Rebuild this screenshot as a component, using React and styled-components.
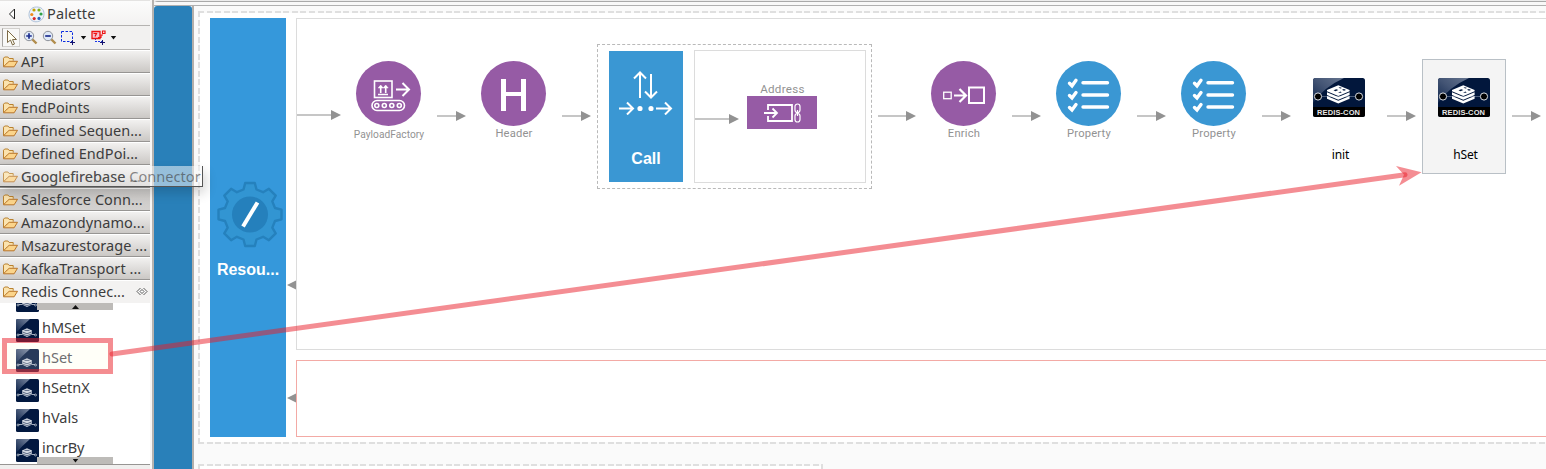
import React from "react";
import styled, { createGlobalStyle } from "styled-components";

const ui = `"Noto Sans", "Open Sans", sans-serif`;

const GlobalStyle = createGlobalStyle`
  *, *::before, *::after { box-sizing: border-box; }
  html, body { margin: 0; padding: 0; background: #fafafa; overflow: hidden; }
  svg { display: block; flex: none; }
`;

const Shell = styled.div`
  position: relative;
  display: flex;
  width: 1546px;
  height: 469px;
  overflow: hidden;
  background: #f2f1f0;
`;

/* ---------- palette ---------- */
const Palette = styled.aside`
  display: flex;
  flex-direction: column;
  width: 150px;
  height: 469px;
  flex: none;
  font-family: ${ui};
  color: #3c3c3c;
`;
const PaletteHead = styled.div`
  display: flex;
  align-items: center;
  height: 26px;
  padding: 2px 0 0 8px;
  border-top: 1px solid #e4e3e2;
  border-bottom: 1px solid #b5b3b1;
  background: linear-gradient(#fcfcfc, #f3f2f1);
`;
const PaletteTitle = styled.span`
  margin: -2px 0 0 2px;
  font-size: 14.5px;
  line-height: 20px;
  letter-spacing: 0.15px;
`;
const Tools = styled.div`
  display: flex;
  align-items: center;
  height: 24px;
  padding-left: 2px;
  background: #f2f1f0;
  border-bottom: 1px solid #b5b3b1;
`;
const ToolButton = styled.span`
  display: flex;
  align-items: center;
  justify-content: center;
  width: ${(p) => p.$w}px;
  height: 19px;
  border: 1px solid ${(p) => (p.$on ? "#d2d0cd" : "transparent")};
  border-left-color: ${(p) => (p.$on ? "#a5a3a0" : "transparent")};
  background: ${(p) => (p.$on ? "#f8f8f7" : "transparent")};
`;
const Drawer = styled.div`
  display: flex;
  align-items: center;
  height: 23px;
  flex: none;
  padding-left: 2px;
  border-top: 1px solid #fff;
  border-bottom: 1px solid ${(p) => (p.$open ? "#f3f2f1" : "#979593")};
  background: ${(p) =>
    p.$open ? "#f3f2f1" : p.$hover ? "linear-gradient(#cbc9c7, #d3d1cf)" : "linear-gradient(#f2f1f0, #cbc8c5)"};
`;
const DrawerLabel = styled.span`
  margin: -2px 0 0 3px;
  font-size: 14.5px;
  line-height: 20px;
  letter-spacing: 0.05px;
  white-space: pre;
`;
const Pin = styled.span`
  margin-left: auto;
  padding-right: 2px;
`;
const Entries = styled.div`
  position: relative;
  height: 161px;
  overflow: hidden;
  background: #fff;
`;
const EntryColumn = styled.div`
  margin-top: -20px;
`;
const Entry = styled.div`
  display: flex;
  align-items: center;
  width: 112px;
  height: 30px;
  padding-left: 16px;
  font-size: 14.5px;
  background: ${(p) => (p.$on ? "#fffff8" : "transparent")};
  color: ${(p) => (p.$on ? "#6e6e70" : "#3c3c3c")};
  svg { margin-top: 5px; opacity: ${(p) => (p.$on ? 0.85 : 1)}; }
`;
const EntryName = styled.span`
  margin: -2px 0 0 3px;
  line-height: 20px;
`;
const Scroller = styled.div`
  position: absolute;
  left: 37px;
  ${(p) => (p.$end ? "bottom: 0;" : "top: 0;")}
  display: flex;
  align-items: center;
  justify-content: center;
  width: 76px;
  height: 7px;
  background: #bdbbb8;
`;
const PaletteFoot = styled.div`
  flex: 1;
  border-top: 1px solid #979593;
  background: #f0efee;
`;
const Tooltip = styled.div`
  position: absolute;
  left: 0;
  top: 166px;
  width: 203px;
  height: 21px;
  padding-left: 21px;
  font: 14.5px/20px ${ui};
  letter-spacing: 0.05px;
  white-space: pre;
  color: rgba(60, 60, 60, 0.78);
  background: linear-gradient(90deg, rgba(248, 248, 248, 0.2) 0 18px, rgba(248, 248, 248, 0.4) 30px 120px, rgba(248, 248, 248, 0.53) 150px);
  border-right: 1px solid #555;
  border-bottom: 1px solid #555;
  box-shadow: 3px 6px 12px rgba(0, 0, 0, 0.16);
`;
const Faded = styled.span`
  color: rgba(60, 60, 60, 0.6);
`;

/* ---------- editor ---------- */
const Sash = styled.div`
  width: 4px;
  flex: none;
  background: linear-gradient(90deg, #f7f6f5 0 2px, #b5b2af 2px 3px, #b8b4b0 3px 4px);
`;
const EditorFrame = styled.div`
  display: flex;
  flex-direction: column;
  flex: 1;
  min-width: 0;
`;
const FrameTop = styled.div`
  height: 6px;
  flex: none;
  border-top: 1px solid #ececec;
  background: linear-gradient(#a9a9a9 0 1px, #f8f8f8 1px 4px, #b0b0b0 4px 5px);
  border-top-left-radius: 4px;
`;
const EditorBody = styled.div`
  display: flex;
  flex: 1;
`;
const Rail = styled.div`
  width: 38px;
  flex: none;
  background: #2980b9;
  border-radius: 3px 3px 0 0;
`;
const Surface = styled.main`
  flex: 1;
  min-width: 0;
  border-left: 2px solid #b3afab;
  background: #fafafa;
  padding: 5px 0 0 4px;
`;
const dashX = "repeating-linear-gradient(90deg, #dfdfdf 0 6px, #fafafa 6px 8.54px)";
const dashY = "repeating-linear-gradient(180deg, #dfdfdf 0 6px, #fafafa 6px 8.54px)";
const Artifact = styled.section`
  display: flex;
  width: ${(p) => p.$w}px;
  height: ${(p) => p.$h}px;
  margin-bottom: 20px;
  padding: 7px 0 0 12px;
  background: ${dashX} 0 0 / 100% 2px no-repeat, ${dashX} 0 100% / 100% 2px no-repeat,
    ${dashY} 0 0 / 2px 100% no-repeat, ${dashY} 100% 0 / 2px 100% no-repeat, #fff;
`;
const Resource = styled.div`
  display: flex;
  flex-direction: column;
  align-items: center;
  width: 76px;
  height: 419px;
  flex: none;
  padding-top: 163px;
  background: #3598db;
  > svg { margin-left: 3px; }
`;
const BlockTitle = styled.span`
  margin-top: ${(p) => p.$gap}px;
  font: bold 16px/20px "Liberation Sans", Arial, sans-serif;
  color: #fff;
`;
const Ports = styled.div`
  display: flex;
  flex-direction: column;
  width: 10px;
  flex: none;
  padding: 261.5px 0 0 1px;
  gap: 103px;
`;
const Flows = styled.div`
  display: flex;
  flex-direction: column;
  gap: 10px;
`;
const Sequence = styled.div`
  position: relative;
  width: 1300px;
  height: ${(p) => p.$h}px;
  border: 1px solid ${(p) => p.$line};
  background: #fff;
`;

/* items placed freely on the sequence canvas */
const Placed = styled.div`
  position: absolute;
  left: ${(p) => p.$x - 297}px;
  top: ${(p) => p.$y - 19}px;
`;
const Mediator = styled(Placed)`
  display: flex;
  flex-direction: column;
  align-items: center;
  width: 79px;
`;
const Disc = styled.div`
  display: flex;
  align-items: center;
  justify-content: center;
  width: 65px;
  height: 65px;
  border-radius: 50%;
  background: ${(p) => p.$fill};
`;
const Caption = styled.span`
  margin-top: ${(p) => p.$gap ?? 1}px;
  padding-left: 1px;
  font: ${(p) => p.$size || 11.2}px/14px Roboto, sans-serif;
  letter-spacing: ${(p) => p.$ls ?? 0.2}px;
  color: #929292;
  white-space: nowrap;
`;
const CallBox = styled(Placed)`
  display: flex;
  gap: 11px;
  width: 275px;
  height: 145px;
  padding: 5px 0 0 11px;
  border: 1px dashed #b9b9b9;
  background: #fff;
`;
const CallBlock = styled.div`
  display: flex;
  flex-direction: column;
  align-items: center;
  width: 74px;
  height: 131px;
  margin-top: 1px;
  padding-top: 20px;
  background: #3a97d3;
`;
const Endpoint = styled.div`
  display: flex;
  width: 172px;
  height: 133px;
  border: 1px solid #dcdcdc;
`;
const EndpointLine = styled.div`
  padding-top: 63px;
`;
const Address = styled.div`
  display: flex;
  flex-direction: column;
  align-items: center;
  margin-left: 8px;
  padding-top: 31px;
`;
const AddressBlock = styled.div`
  display: flex;
  align-items: center;
  justify-content: center;
  width: 70px;
  height: 33px;
  background: #965ba5;
`;
const Connector = styled(Placed)`
  display: flex;
  flex-direction: column;
  align-items: center;
  width: 84px;
  height: 115px;
  padding-top: 18px;
  border: 1px solid ${(p) => (p.$on ? "#b9c0c6" : "transparent")};
  background: ${(p) => (p.$on ? "#f4f4f4" : "transparent")};
`;
const ConnectorName = styled.span`
  margin-top: 30px;
  padding-left: 3px;
  font: 12px/16px ${ui};
  letter-spacing: -0.1px;
  color: #000;
`;
const Annotation = styled.svg`
  position: absolute;
  left: 0;
  top: 0;
`;

/* ---------- drawings ---------- */
const Folder = () => (
  <svg width="16" height="14" viewBox="0 0 16 14">
    <path d="M1.5 11.5V3.2L2.7 2h3.2l1.3 1.5h4v2.2" fill="#fbe3ae" stroke="#b9812f" />
    <path d="M1.5 11.8L5.2 8l2-1.7h8.3l-3.4 5.5z" fill="#fbd48a" stroke="#b9762a" strokeLinejoin="round" />
  </svg>
);
const PaletteIcon = () => (
  <svg width="17" height="17" viewBox="0 0 17 17">
    <path d="M8.5 1C3 1 1 5 1 8.8S4 15.8 8 15.8 16 13 16 8 13 1 8.5 1z" fill="#eef4fb" stroke="#9db4cf" strokeWidth=".8" />
    <circle cx="6" cy="4" r="1.6" fill="#c4a000" />
    <circle cx="11" cy="4" r="1.6" fill="#7fae1c" />
    <circle cx="13" cy="8" r="1.6" fill="#2fa347" />
    <circle cx="3.8" cy="8.5" r="1.6" fill="#f08a1d" />
    <circle cx="6.2" cy="12.6" r="1.6" fill="#d92b2b" />
    <circle cx="11" cy="12.4" r="1.6" fill="#2c62b8" />
  </svg>
);
const Magnifier = ({ plus }) => (
  <svg width="15" height="15" viewBox="0 0 15 15">
    <path d="M9 9l4.5 4.5" stroke="#b08d4c" strokeWidth="2.4" />
    <circle cx="6" cy="6" r="4.7" fill="#dfe9f7" stroke="#8d9199" />
    <path d={plus ? "M3.2 6h5.6M6 3.2v5.6" : "M3.2 6h5.6"} stroke="#1f2f8f" strokeWidth="1.7" />
  </svg>
);
const Caret = ({ up }) => (
  <svg width="7" height="4" viewBox="0 0 7 4">
    <path d={up ? "M0 4L3.5 0 7 4z" : "M.8 0h5.4L3.5 3.6z"} fill="#111" />
  </svg>
);
const ArrowRight = ({ tail }) => (
  <svg width={tail + 10} height="10" viewBox={`0 0 ${tail + 10} 10`}>
    <path d={`M0 5H${tail}`} stroke="#c6c6c6" strokeWidth="2" />
    <path d={`M${tail} 0L${tail + 10} 5L${tail} 10z`} fill="#929292" />
  </svg>
);
const PortArrow = () => (
  <svg width="9" height="10" viewBox="0 0 9 10">
    <path d="M9 .5v9L0 5z" fill="#929292" />
  </svg>
);
const SmallRedis = () => (
  <svg width="23" height="23" viewBox="0 0 23 23">
    <defs>
      <linearGradient id="sheen" x1="0" y1="1" x2="1" y2="0">
        <stop offset="0" stopColor="#0a2048" />
        <stop offset="1" stopColor="#7b89a1" />
      </linearGradient>
    </defs>
    <rect width="23" height="23" rx="1.5" fill="#02183f" />
    <path d="M0 1.5Q0 0 1.500 0H14Q7 6 0 14z" fill="url(#sheen)" />
    <path d="M2 15.500h4M16 15.500h4" stroke="#cdd3dd" strokeWidth=".8" />
    <circle cx="2" cy="16" r="1" fill="#02183f" stroke="#cfd5de" strokeWidth=".7" />
    <circle cx="19.500" cy="16" r="1" fill="#02183f" stroke="#cfd5de" strokeWidth=".7" />
    <path d="M6 11.500L11 9.200l5 2.300v4L11 17.900l-5-2.400z" fill="#d3d8e1" />
    <path d="M6 12.800l5 2 5-2M6 14.800l5 2 5-2M8.500 11.400h5" stroke="#27395a" strokeWidth=".7" fill="none" />
  </svg>
);
const RedisCard = () => (
  <svg width="52" height="39" viewBox="0 0 52 39">
    <defs>
      <linearGradient id="shine" x1="0" y1="1" x2="1" y2="0">
        <stop offset="0" stopColor="#12284e" />
        <stop offset=".5" stopColor="#435474" />
        <stop offset="1" stopColor="#66758f" />
      </linearGradient>
    </defs>
    <rect width="52" height="39" rx="2.5" fill="#02173c" />
    <path d="M0 2.5Q0 0 2.5 0H31Q11 9 0 25z" fill="url(#shine)" />
    <path d="M0 29h52v7.500q0 2.500-2.500 2.500h-47Q0 39 0 36.500z" fill="#000" />
    <path d="M5 18.500h42" stroke="#60708c" strokeWidth=".8" />
    <path d="M14 18v2.800L25.300 25.500 36.600 20.800V18L25.300 22.700zM14 14.200V17l11.300 4.700L36.600 17v-2.800L25.300 18.900z" fill="#fff" />
    <path d="M14 12v1.200L25.300 17.900l11.300-4.700V12L25.300 7.300z" fill="#fff" />
    <path d="M20.500 12.300l2.800-1.100 2 .9-2.800 1.200zM25.500 9.800l1.500-.6 2 .8-1.500.6zM29 11.800l2-.8 2 .9-2 .8zM25 14.800l2.500-1.300 1.200 1.300z" fill="#02173c" />
    <circle cx="5" cy="18.500" r="3.600" fill="#000" stroke="#d8dbe0" strokeWidth="1" />
    <circle cx="46" cy="18.500" r="3.600" fill="#000" stroke="#d8dbe0" strokeWidth="1" />
    <text x="4" y="36.500" textLength="43" fontFamily="Liberation Sans" fontSize="7.500" fontWeight="bold" fill="#e8e8e8">REDIS-CON</text>
  </svg>
);

const gearPath = (() => {
  const pts = [];
  const at = (deg, along, side) => {
    const a = (deg * Math.PI) / 180;
    pts.push(`${(33 + Math.cos(a) * along - Math.sin(a) * side).toFixed(1)} ${(33.5 + Math.sin(a) * along + Math.cos(a) * side).toFixed(1)}`);
  };
  for (let d = 0; d < 360; d += 45) {
    at(d, 25, -6.5);
    at(d, 31.5, -4.8);
    at(d, 31.5, 4.8);
    at(d, 25, 6.5);
  }
  return `M${pts.join("L")}Z`;
})();
const Gear = () => (
  <svg width="66" height="67" viewBox="0 0 66 67">
    <path d={gearPath} fill="#3295d2" stroke="#2581bd" strokeWidth="2.4" strokeLinejoin="round" />
    <circle cx="33" cy="33.500" r="18" fill="#2580bc" />
    <path d="M26 45.500L40.500 21.500" stroke="#fff" strokeWidth="4" />
  </svg>
);
const White = ({ w, h, sw = 2, children }) => (
  <svg width={w} height={h} viewBox={`0 0 ${w} ${h}`} fill="none" stroke="#fff" strokeWidth={sw}>
    {children}
  </svg>
);
const glyphs = {
  payload: (
    <White w={65} h={65} sw={1.6}>
      <rect x="18.500" y="20" width="17.500" height="16.500" />
      <path d="M22 33.500h10M24.700 32v-7M29.700 32v-7" />
      <path d="M22.200 27l2.500-3 2.500 3zM27.200 27l2.500-3 2.500 3z" fill="#fff" strokeWidth=".5" />
      <path d="M40 28.500h13M46.500 22l6.500 6.500-6.500 6.500" strokeWidth="2" />
      <rect x="16" y="39.500" width="32.500" height="10" rx="5" />
      {[21, 28.5, 36, 43.5].map((x) => <circle key={x} cx={x - 0.2} cy="44.500" r="2" />)}
    </White>
  ),
  header: (
    <White w={65} h={65} sw={5}>
      <path d="M22.500 18v32M42.500 18v32" />
      <path d="M22.500 33h20" strokeWidth="4" />
    </White>
  ),
  enrich: (
    <White w={65} h={65} sw={1.3}>
      <rect x="12.700" y="31.200" width="7.500" height="6.500" />
      <path d="M23 34.500h12M28.500 28l6.500 6.500-6.500 6.500" strokeWidth="2.200" />
      <rect x="38" y="26.500" width="15" height="15.500" strokeWidth="2" />
    </White>
  ),
  property: (
    <White w={65} h={65} sw={3.4}>
      {[21.8, 34, 46].map((y) => (
        <g key={y} strokeLinecap="round">
          <path d={`M27 ${y}h24.500`} />
          <path d={`M13.500 ${y + 0.5}l2.500 2.500 4-5.500`} />
        </g>
      ))}
    </White>
  ),
};

const purple = "#965ba5";
const blue = "#3a97d3";
const mediators = [
  { x: 349, icon: "payload", name: "PayloadFactory", fill: purple, size: 10.2, ls: 0.02, gap: 1.5 },
  { x: 474, icon: "header", name: "Header", fill: purple },
  { x: 924, icon: "enrich", name: "Enrich", fill: purple },
  { x: 1049, icon: "property", name: "Property", fill: blue },
  { x: 1174, icon: "property", name: "Property", fill: blue },
];
const links = [[437, 19], [562, 19], [878, 28], [1012, 19], [1137, 19], [1262, 19], [1387, 19], [1512, 19]];
const drawers = [
  "API", "Mediators", "EndPoints", "Defined Sequen...", "Defined EndPoi...",
  "Googlefirebase ...", "Salesforce Conn...", "Amazondynamo...", "Msazurestorage ...", "KafkaTransport ...",
];
const entries = ["hMGet", "hMSet", "hSet", "hSetnX", "hVals", "incrBy"];

export default function App() {
  return (
    <>
      <GlobalStyle />
      <Shell>
        <Palette>
          <PaletteHead>
            <svg width="20" height="14" viewBox="0 0 20 14"><path d="M6.500 2v10L1.500 7z" fill="#fff" stroke="#222" /></svg>
            <PaletteIcon />
            <PaletteTitle>Palette</PaletteTitle>
          </PaletteHead>
          <Tools>
            <ToolButton $w={18} $on>
              <svg width="12" height="17" viewBox="0 0 12 17"><path d="M2.500 1.500v12l3-2.500 2 5 2-1-2-4.500h4z" fill="#fffef0" stroke="#7d6a48" /></svg>
            </ToolButton>
            <ToolButton $w={21}><Magnifier plus /></ToolButton>
            <ToolButton $w={17}><Magnifier /></ToolButton>
            <ToolButton $w={20}>
              <svg width="16" height="15" viewBox="0 0 16 15">
                <path d="M1.500 1.500h11v10h-11z" fill="none" stroke="#0a2ce0" strokeDasharray="2.500 1.500" />
                <path d="M10 12.500h5M12.500 10v5" stroke="#14146e" />
              </svg>
            </ToolButton>
            <ToolButton $w={11}><Caret /></ToolButton>
            <ToolButton $w={19}>
              <svg width="15" height="15" viewBox="0 0 15 15">
                <path d="M4 11.500h7M4.500 8v4" stroke="#1b36e8" strokeDasharray="2 1" fill="none" />
                <path d="M1 1.500h8v7H1z" stroke="#ee1111" strokeWidth="1.300" fill="#f6c3d0" />
                <path d="M2.500 3.500h3l-1.500 3M7 7.500h3v-2.500h2M11.500 1h2.500v2.500h-2.500z" stroke="#ee1111" strokeWidth="1.200" fill="none" />
                <path d="M9 12.500h5M11.500 10v5" stroke="#14146e" />
              </svg>
            </ToolButton>
            <ToolButton $w={11}><Caret /></ToolButton>
          </Tools>
          {drawers.map((name, i) => (
            <Drawer key={name} $hover={i === 6}>
              <Folder />
              <DrawerLabel>{name}</DrawerLabel>
            </Drawer>
          ))}
          <Drawer $open>
            <Folder />
            <DrawerLabel>Redis Connec...</DrawerLabel>
            <Pin>
              <svg width="12" height="9" viewBox="0 0 12 9" fill="#fff" stroke="#444" strokeWidth=".9">
                <path d="M4.500 1L1 4.500 4.500 8M7.500 1L11 4.500 7.500 8" /><path d="M6 2.500l2 2-2 2-2-2z" />
              </svg>
            </Pin>
          </Drawer>
          <Entries>
            <EntryColumn>
              {entries.map((name) => (
                <Entry key={name} $on={name === "hSet"}>
                  <SmallRedis />
                  <EntryName>{name}</EntryName>
                </Entry>
              ))}
            </EntryColumn>
            <Scroller><Caret up /></Scroller>
            <Scroller $end><Caret /></Scroller>
          </Entries>
          <PaletteFoot />
        </Palette>
        <Sash />
        <EditorFrame>
          <FrameTop />
          <EditorBody>
            <Rail />
            <Surface>
              <Artifact $w={1400} $h={433}>
                <Resource>
                  <Gear />
                  <BlockTitle $gap={12}>Resou...</BlockTitle>
                </Resource>
                <Ports><PortArrow /><PortArrow /></Ports>
                <Flows>
                  <Sequence $h={332} $line="#dcdcdc">
                    <Placed $x={297} $y={110}><ArrowRight tail={34} /></Placed>
                    {links.map(([x, tail]) => (
                      <Placed key={x} $x={x} $y={111}><ArrowRight tail={tail} /></Placed>
                    ))}
                    {mediators.map((m) => (
                      <Mediator key={m.x} $x={m.x} $y={61}>
                        <Disc $fill={m.fill}>{glyphs[m.icon]}</Disc>
                        <Caption $size={m.size} $ls={m.ls} $gap={m.gap}>{m.name}</Caption>
                      </Mediator>
                    ))}
                    <CallBox $x={597} $y={44}>
                      <CallBlock>
                        <White w={56} h={44} sw={2}>
                          <path d="M22 27V2M16 7.500L22 1.500l6 6M33 3v23.500M27 20.500l6 6 6-6M1 37.500h14M9 31.500l6 6-6 6M38 37.500h15M47 31.500l6 6-6 6" />
                          <circle cx="22" cy="37.500" r="1.600" fill="#fff" />
                          <circle cx="33" cy="37.500" r="1.600" fill="#fff" />
                        </White>
                        <BlockTitle $gap={34}>Call</BlockTitle>
                      </CallBlock>
                      <Endpoint>
                        <EndpointLine><ArrowRight tail={34} /></EndpointLine>
                        <Address>
                          <Caption $size={11.6} $ls={0.3} $gap={0}>Address</Caption>
                          <AddressBlock>
                            <White w={40} h={22} sw={1.8}>
                              <path d="M6 8V3h24v16H6v-5M2 11h13M10.500 6.500L15 11l-4.500 4.500" />
                              <rect x="33" y="2" width="5" height="8.500" rx="2.500" strokeWidth="1.200" />
                              <rect x="33" y="11.500" width="5" height="8.500" rx="2.500" strokeWidth="1.200" />
                              <path d="M35.500 8v6" strokeWidth="1.200" />
                            </White>
                          </AddressBlock>
                        </Address>
                      </Endpoint>
                    </CallBox>
                    <Connector $x={1297} $y={59}><RedisCard /><ConnectorName>init</ConnectorName></Connector>
                    <Connector $x={1422} $y={59} $on><RedisCard /><ConnectorName>hSet</ConnectorName></Connector>
                  </Sequence>
                  <Sequence $h={77} $line="#f3aaa5" />
                </Flows>
              </Artifact>
              <Artifact $w={625} $h={60} />
            </Surface>
          </EditorBody>
        </EditorFrame>
        <Tooltip>Googlefirebase <Faded>Connector</Faded></Tooltip>
        <Annotation width="1546" height="469" viewBox="0 0 1546 469">
          <g stroke="rgba(234,28,40,.5)" fill="none" strokeWidth="5">
            <rect x="4.500" y="340.500" width="106" height="31" />
            <path d="M112 354L1405 174.700" strokeLinecap="round" />
          </g>
          <path d="M1421.500 172.200L1396 166l8 8.700-5 11z" fill="rgba(234,28,40,.5)" />
        </Annotation>
      </Shell>
    </>
  );
}
